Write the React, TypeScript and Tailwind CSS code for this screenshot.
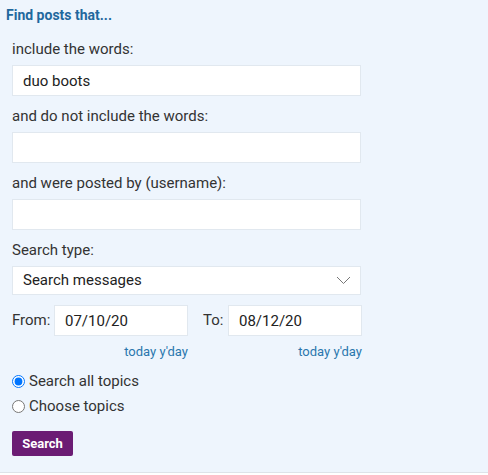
export default function App() {
  const fieldLabel = "block h-5 leading-5 text-[15px] text-[#333]";
  const textInput =
    "block w-[349px] h-[31px] bg-white border border-[#e1e8ef] pl-[10px] text-[15px] text-[#222] outline-none";

  return (
    <div
      className="w-[488px] h-[473px] bg-[#eef5fd] border-b border-[#dde3e9]"
      style={{ fontFamily: "Roboto, 'Liberation Sans', sans-serif" }}
    >
      {/* Heading */}
      <div className="px-[6px] pt-[6px] h-6 leading-[18px] text-[14px] font-bold text-[#1f689d]">
        Find posts that...
      </div>

      <div className="px-3">
        <label className={`${fieldLabel} mt-[15px]`}>include the words:</label>
        <input className={`${textInput} mt-[6px]`} defaultValue="duo boots" />

        <label className={`${fieldLabel} mt-[10px]`}>and do not include the words:</label>
        <input className={`${textInput} mt-[6px]`} />

        <label className={`${fieldLabel} mt-[10px]`}>and were posted by (username):</label>
        <input className={`${textInput} mt-[6px]`} />

        <label className={`${fieldLabel} mt-[10px]`}>Search type:</label>
        <div className="mt-[6px] w-[349px] h-[29px] bg-white border border-[#e1e8ef] pl-[10px] pr-[9px] flex items-center justify-between text-[15px] text-[#222]">
          <span>Search messages</span>
          <svg width="15" height="9" viewBox="0 0 15 9" fill="none">
            <path d="M1 1l6.5 6.5L14 1" stroke="#777" strokeWidth="1" />
          </svg>
        </div>

        {/* Date range */}
        <div className="mt-[10px] flex items-center text-[15px] text-[#333]">
          <span className="w-[42px]">From:</span>
          <input
            className="w-[134px] h-[31px] bg-white border border-[#e1e8ef] pl-[10px] text-[15px] text-[#222] outline-none"
            defaultValue="07/10/20"
          />
          <span className="ml-[15px] w-[25px]">To:</span>
          <input
            className="w-[134px] h-[31px] bg-white border border-[#e1e8ef] pl-[10px] text-[15px] text-[#222] outline-none"
            defaultValue="08/12/20"
          />
        </div>
        <div className="mt-[8px] flex h-4 leading-4 text-[13px] text-[#2a77ad]">
          <div className="ml-[42px] w-[134px] text-right">
            <a href="#">today</a> <a href="#">y'day</a>
          </div>
          <div className="ml-[40px] w-[134px] text-right">
            <a href="#">today</a> <a href="#">y'day</a>
          </div>
        </div>

        {/* Topic choice */}
        <div className="mt-[11px] flex flex-col gap-[5px] text-[15px] text-[#333]">
          <label className="flex items-center h-5 gap-[4px]">
            <input type="radio" name="topics" defaultChecked className="m-0 w-[13px] h-[13px]" />
            Search all topics
          </label>
          <label className="flex items-center h-5 gap-[4px]">
            <input type="radio" name="topics" className="m-0 w-[13px] h-[13px]" />
            Choose topics
          </label>
        </div>

        <button className="mt-[15px] w-[61px] h-[25px] rounded-[2px] bg-[#6b1c74] text-white text-[13px] font-bold">
          Search
        </button>
      </div>
    </div>
  );
}
